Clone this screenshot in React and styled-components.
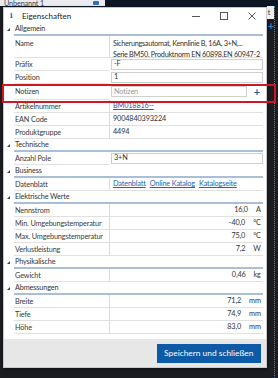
import React from "react";
import styled, { createGlobalStyle } from "styled-components";

const GlobalStyle = createGlobalStyle`
  html, body {
    margin: 0;
    padding: 0;
    background: #1b1d21;
  }
  * { box-sizing: border-box; }
`;

const Page = styled.div`
  position: relative;
  width: 278px;
  height: 378px;
  overflow: hidden;
  display: flex;
  flex-direction: column;
  background: #1b1d21;
  font-family: Lato, "Open Sans", sans-serif;
  font-size: 7.3px;
  letter-spacing: -0.15px;
  color: #333;
`;

const TopStrip = styled.div`
  height: 7px;
  display: flex;
  background: #0c1624;
`;

const Tab = styled.div`
  width: 105px;
  height: 6px;
  background: #e9ebee;
  display: flex;
  align-items: flex-end;
  justify-content: space-between;
  padding: 0 6px 0 4px;
  overflow: hidden;
  span {
    line-height: 8px;
    margin-bottom: -2px;
    color: #444;
  }
`;

const Pin = styled.div`
  width: 6px;
  height: 4px;
  margin-bottom: 1px;
  background: #2f6fb8;
  border-radius: 1px;
`;

const Stage = styled.div`
  flex: 1;
  display: flex;
  padding-left: 3px;
`;

const Window = styled.div`
  width: 265px;
  height: 361px;
  background: #fff;
  display: flex;
  flex-direction: column;
  border: 1px solid #c9c9c9;
  box-shadow: 0 1px 3px rgba(0, 0, 0, 0.5);
`;

const TitleBar = styled.div`
  height: 16px;
  display: flex;
  align-items: center;
  padding: 0 0 0 6px;
  font-size: 8px;
  letter-spacing: 0;
  color: #222;
`;

const InfoIcon = styled.span`
  width: 4px;
  color: #2d5f9a;
  font-weight: 700;
  font-family: "DejaVu Serif", serif;
  font-size: 7px;
  margin-right: 8px;
`;

const Title = styled.span`
  flex: 1;
`;

const Ctrl = styled.span`
  width: 28px;
  display: flex;
  justify-content: center;
  align-items: center;
  color: #444;
`;

const Body = styled.div`
  flex: 1;
  padding: 0 3px 0 2px;
`;

const CatRow = styled.div`
  height: 13px;
  display: flex;
  align-items: stretch;
`;

const Caret = styled.div`
  width: 8px;
  display: flex;
  align-items: center;
  padding-left: 1px;
  &::before {
    content: "";
    width: 0;
    height: 0;
    border-left: 3px solid transparent;
    border-bottom: 3px solid #444;
  }
`;

const CatTitle = styled.div`
  flex: 1;
  display: flex;
  align-items: center;
  padding-left: 1px;
  border-bottom: 2px solid #a9bfd8;
  color: #333;
`;

const PropRow = styled.div`
  margin-left: 8px;
  height: ${(p) => p.$h || 13}px;
  display: grid;
  grid-template-columns: 95px 1fr;
`;

const Label = styled.div`
  display: flex;
  align-items: ${(p) => (p.$top ? "flex-start" : "center")};
  padding: ${(p) => (p.$top ? "3px 0 0 1px" : "0 0 0 1px")};
  border-bottom: 1px solid #e1e1e1;
  color: #3a3a3a;
  white-space: nowrap;
  overflow: hidden;
`;

const Value = styled.div`
  display: flex;
  flex-direction: ${(p) => (p.$stack ? "column" : "row")};
  justify-content: ${(p) => (p.$right ? "flex-end" : "flex-start")};
  align-items: ${(p) => (p.$stack ? "flex-start" : "center")};
  gap: ${(p) => (p.$stack ? "1px" : "4px")};
  padding: ${(p) => (p.$stack ? "3px 0 0 3px" : p.$plain ? "0 2px 0 3px" : "0 0 0 1px")};
  border-left: 1px solid ${(p) => (p.$plain ? "#dcdcdc" : "transparent")};
  border-bottom: 1px solid ${(p) => (p.$plain ? "#e1e1e1" : "transparent")};
  letter-spacing: ${(p) => (p.$stack ? "-0.3px" : "inherit")};
  white-space: nowrap;
  overflow: hidden;
  line-height: 10px;
`;

const Input = styled.div`
  flex: 1;
  height: 11px;
  border: 1px solid #cfcfcf;
  background: #fff;
  display: flex;
  align-items: center;
  padding-left: 2px;
  color: ${(p) => (p.$placeholder ? "#9a9a9a" : "#333")};
`;

const AddBtn = styled.span`
  width: 12px;
  text-align: center;
  font-size: 11px;
  font-weight: 700;
  color: #1f5fa8;
  line-height: 10px;
`;

const Link = styled.span`
  color: #2065b8;
  text-decoration: underline;
`;

const Unit = styled.span`
  margin-left: 4px;
`;

const Footer = styled.div`
  height: 29px;
  margin-top: 5px;
  background: #e7e7e7;
  display: flex;
  justify-content: flex-end;
  align-items: center;
  padding-right: 5px;
`;

const SaveButton = styled.button`
  width: 104px;
  height: 19px;
  border: none;
  background: #0d5aa6;
  color: #fff;
  font-family: Lato, "Open Sans", sans-serif;
  font-size: 8.4px;
  padding: 0;
`;

const RightEdge = styled.div`
  flex: 1;
  display: flex;
  flex-direction: column;
  align-items: flex-start;
  border-right: 1px dotted #3c8fa8;
  margin-right: 3px;
  margin-top: -1px;
`;

const EdgeTab = styled.div`
  width: 7px;
  height: 13px;
  background: #eceef1;
  color: #333;
  font-size: 7px;
  padding-left: 1px;
  line-height: 13px;
`;

const EdgePlus = styled.div`
  margin: 2px 0 0 1px;
  color: #2f7fd0;
  font-size: 11px;
  font-weight: 700;
  line-height: 10px;
`;

const Highlight = styled.div`
  position: absolute;
  left: 2px;
  top: 84px;
  width: 274px;
  height: 19px;
  border: 2px solid #cc1820;
  pointer-events: none;
`;

const sections = [
  {
    title: "Allgemein",
    rows: [
      {
        label: "Name",
        h: 22,
        lines: [
          "Sicherungsautomat, Kennlinie B, 16A, 3+N,...",
          "Serie BM50, Produktnorm EN 60898,EN 60947-2",
        ],
      },
      { label: "Präfix", input: "-F" },
      { label: "Position", input: "1" },
      { label: "Notizen", placeholder: "Notizen", add: true, h: 16 },
      { label: "Artikelnummer", links: ["BM018816--"] },
      { label: "EAN Code", text: "9004840393224" },
      { label: "Produktgruppe", text: "4494" },
    ],
  },
  { title: "Technische", rows: [{ label: "Anzahl Pole", input: "3+N" }] },
  {
    title: "Business",
    rows: [
      { label: "Datenblatt", links: ["Datenblatt", "Online Katalog", "Katalogseite"] },
    ],
  },
  {
    title: "Elektrische Werte",
    rows: [
      { label: "Nennstrom", num: "16,0", unit: "A" },
      { label: "Min. Umgebungstemperatur", num: "-40,0", unit: "°C" },
      { label: "Max. Umgebungstemperatur", num: "75,0", unit: "°C" },
      { label: "Verlustleistung", num: "7,2", unit: "W" },
    ],
  },
  { title: "Physikalische", rows: [{ label: "Gewicht", num: "0,46", unit: "kg" }] },
  {
    title: "Abmessungen",
    rows: [
      { label: "Breite", num: "71,2", unit: "mm" },
      { label: "Tiefe", num: "74,9", unit: "mm" },
      { label: "Höhe", num: "83,0", unit: "mm" },
    ],
  },
];

function PropValue({ row }) {
  if (row.lines) {
    return (
      <Value $plain $stack>
        {row.lines.map((l) => (
          <span key={l}>{l}</span>
        ))}
      </Value>
    );
  }
  if (row.input !== undefined || row.placeholder) {
    return (
      <Value>
        <Input $placeholder={!!row.placeholder}>{row.input || row.placeholder}</Input>
        {row.add && <AddBtn>+</AddBtn>}
      </Value>
    );
  }
  if (row.links) {
    return (
      <Value $plain>
        {row.links.map((l) => (
          <Link key={l}>{l}</Link>
        ))}
      </Value>
    );
  }
  if (row.num) {
    return (
      <Value $plain $right>
        {row.num}
        <Unit>{row.unit}</Unit>
      </Value>
    );
  }
  return <Value $plain>{row.text}</Value>;
}

export default function App() {
  return (
    <Page>
      <GlobalStyle />
      <TopStrip>
        <Tab>
          <span>Unbenannt 1</span>
          <Pin />
        </Tab>
      </TopStrip>
      <Stage>
        <Window>
          <TitleBar>
            <InfoIcon>i</InfoIcon>
            <Title>Eigenschaften</Title>
            <Ctrl>
              <svg width="8" height="8" viewBox="0 0 8 8">
                <path d="M0 4.5h8" stroke="#555" strokeWidth="1" />
              </svg>
            </Ctrl>
            <Ctrl>
              <svg width="8" height="8" viewBox="0 0 8 8">
                <rect x="0.5" y="0.5" width="7" height="7" fill="none" stroke="#555" strokeWidth="1" />
              </svg>
            </Ctrl>
            <Ctrl>
              <svg width="8" height="8" viewBox="0 0 8 8">
                <path d="M0.5 0.5l7 7M7.5 0.5l-7 7" stroke="#555" strokeWidth="1" />
              </svg>
            </Ctrl>
          </TitleBar>
          <Body>
            {sections.map((s) => (
              <React.Fragment key={s.title}>
                <CatRow>
                  <Caret />
                  <CatTitle>{s.title}</CatTitle>
                </CatRow>
                {s.rows.map((r) => (
                  <PropRow key={r.label} $h={r.h}>
                    <Label $top={!!r.lines}>{r.label}</Label>
                    <PropValue row={r} />
                  </PropRow>
                ))}
              </React.Fragment>
            ))}
          </Body>
          <Footer>
            <SaveButton>Speichern und schließen</SaveButton>
          </Footer>
        </Window>
        <RightEdge>
          <EdgeTab>t</EdgeTab>
          <EdgePlus>+</EdgePlus>
        </RightEdge>
      </Stage>
      <Highlight />
    </Page>
  );
}
